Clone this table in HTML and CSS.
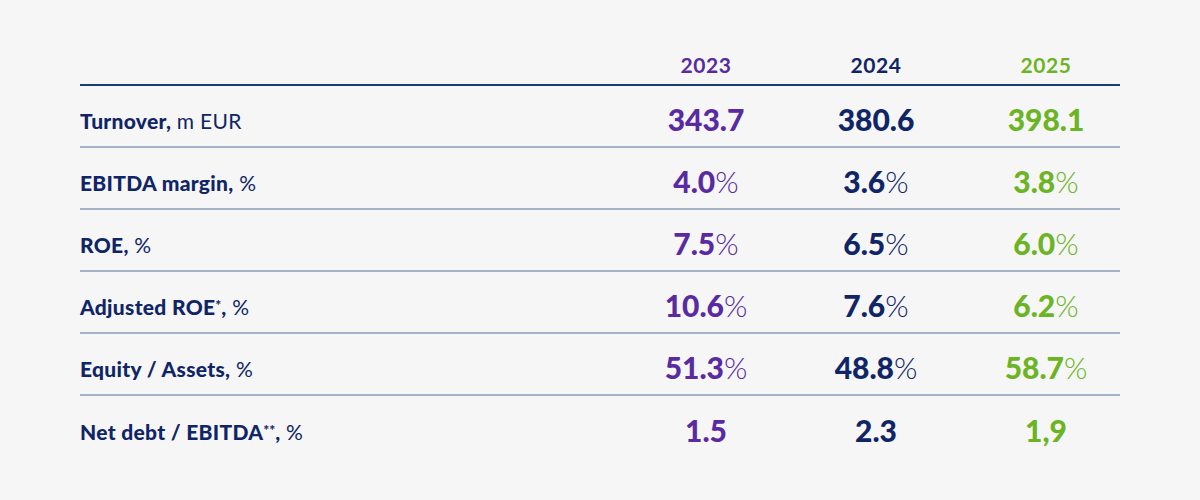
FILE: index.html
```html
<!DOCTYPE html>
<html lang="en">
<head>
<meta charset="utf-8">
<title>Key figures</title>
<link rel="stylesheet" href="styles.css">
</head>
<body>
<div class="page">
  <div class="table">
    <div class="row head">
      <div class="label"></div>
      <div class="cell c23">2023</div>
      <div class="cell c24">2024</div>
      <div class="cell c25">2025</div>
    </div>
    <div class="row">
      <div class="label"><b>Turnover,</b> m EUR</div>
      <div class="cell c23">343.7</div>
      <div class="cell c24">380.6</div>
      <div class="cell c25">398.1</div>
    </div>
    <div class="row">
      <div class="label"><b>EBITDA margin,</b> %</div>
      <div class="cell c23">4.0<span class="pct">%</span></div>
      <div class="cell c24">3.6<span class="pct">%</span></div>
      <div class="cell c25">3.8<span class="pct">%</span></div>
    </div>
    <div class="row">
      <div class="label"><b>ROE,</b> %</div>
      <div class="cell c23">7.5<span class="pct">%</span></div>
      <div class="cell c24">6.5<span class="pct">%</span></div>
      <div class="cell c25">6.0<span class="pct">%</span></div>
    </div>
    <div class="row">
      <div class="label"><b>Adjusted ROE<span class="ast">*</span>,</b> %</div>
      <div class="cell c23">10.6<span class="pct">%</span></div>
      <div class="cell c24">7.6<span class="pct">%</span></div>
      <div class="cell c25">6.2<span class="pct">%</span></div>
    </div>
    <div class="row">
      <div class="label"><b>Equity / Assets,</b> %</div>
      <div class="cell c23">51.3<span class="pct">%</span></div>
      <div class="cell c24">48.8<span class="pct">%</span></div>
      <div class="cell c25">58.7<span class="pct">%</span></div>
    </div>
    <div class="row last">
      <div class="label"><b>Net debt / EBITDA<span class="ast">**</span>,</b> %</div>
      <div class="cell c23">1.5</div>
      <div class="cell c24">2.3</div>
      <div class="cell c25">1,9</div>
    </div>
  </div>
</div>
</body>
</html>
```

FILE: styles.css
```css
html, body {
  margin: 0;
  padding: 0;
  background: #f6f6f6;
}
body {
  font-family: Lato, "Liberation Sans", sans-serif;
  color: #0f2566;
}
.page {
  width: 1200px;
  height: 500px;
  padding: 48px 80px 0 80px;
  box-sizing: border-box;
}
.table {
  display: flex;
  flex-direction: column;
}
.row {
  display: grid;
  grid-template-columns: 1fr 170px 170px 159px;
  align-items: center;
  height: 62px;
  border-bottom: 2px solid #a4b3ca;
  box-sizing: border-box;
}
.row.head {
  height: 38px;
  border-bottom: 2px solid #163c7a;
  align-items: end;
  padding-bottom: 9px;
}
.row.last {
  border-bottom: none;
}
.label {
  font-size: 21px;
  font-weight: 400;
  letter-spacing: 0.3px;
  color: #0f2566;
  white-space: nowrap;
  padding-top: 9px;
}
.label b {
  font-weight: 900;
}
.ast {
  font-size: 14px;
  letter-spacing: 0;
  vertical-align: 5px;
  line-height: 0;
}
.cell {
  text-align: center;
  font-size: 30px;
  font-weight: 900;
  line-height: 1;
  padding-top: 5px;
}
.cell:last-child {
  padding-left: 11px;
}
.head .cell {
  font-size: 21px;
  font-weight: 700;
  letter-spacing: 0.6px;
  padding-top: 0;
}
.pct {
  font-weight: 300;
}
.c23 { color: #5a2aa0; }
.c24 { color: #0f2566; }
.c25 { color: #6cb424; }
```
